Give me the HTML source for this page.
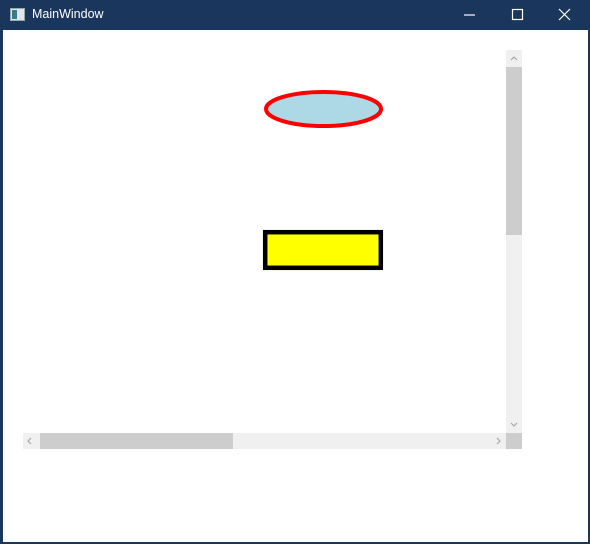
<!DOCTYPE html>
<html><head><style>
body{margin:0;width:590px;height:544px;overflow:hidden;background:#1b365d;font-family:"Liberation Sans",sans-serif;position:relative}
.t{position:absolute;left:32px;top:7px;color:#fff;font-size:12.5px}
.c{position:absolute;left:3px;top:30px;width:585px;height:512px;background:#fff}
.a{position:absolute}
</style></head><body>
<svg class="a" style="left:10px;top:8px" width="15" height="13"><rect x="0.5" y="0.5" width="14" height="12" fill="#dfe6ee" stroke="#9aa"/><rect x="2" y="2" width="5" height="9" fill="#3a7a8a"/></svg>
<div class="t">MainWindow</div>
<svg class="a" style="left:460px;top:5px" width="125" height="20" stroke="#fff" fill="none" stroke-width="1.2">
<line x1="4" y1="10" x2="15" y2="10"/><rect x="52.5" y="4.5" width="10" height="10"/><line x1="99" y1="4" x2="110" y2="15"/><line x1="110" y1="4" x2="99" y2="15"/></svg>
<div class="c"></div>
<svg class="a" style="left:0;top:0" width="590" height="544">
<ellipse cx="323.5" cy="109" rx="57.5" ry="17" fill="#add8e6" stroke="#f00" stroke-width="4"/>
<rect x="265.2" y="232.2" width="115.6" height="35.6" fill="#ff0" stroke="#000" stroke-width="4.5"/>
<rect x="506" y="50" width="16" height="383" fill="#f0f0f0"/>
<rect x="506" y="67" width="16" height="168" fill="#cdcdcd"/>
<rect x="23" y="433" width="483" height="16" fill="#f0f0f0"/>
<rect x="40" y="433" width="193" height="16" fill="#cdcdcd"/>
<rect x="506" y="433" width="16" height="16" fill="#cdcdcd"/>
<g stroke="#a0a0a0" fill="none" stroke-width="1">
<polyline points="511,60 514,57 517,60"/><polyline points="511,423 514,426 517,423"/>
<polyline points="31,438 28,441 31,444"/><polyline points="497,438 500,441 497,444"/></g>
</svg>
</body></html>
